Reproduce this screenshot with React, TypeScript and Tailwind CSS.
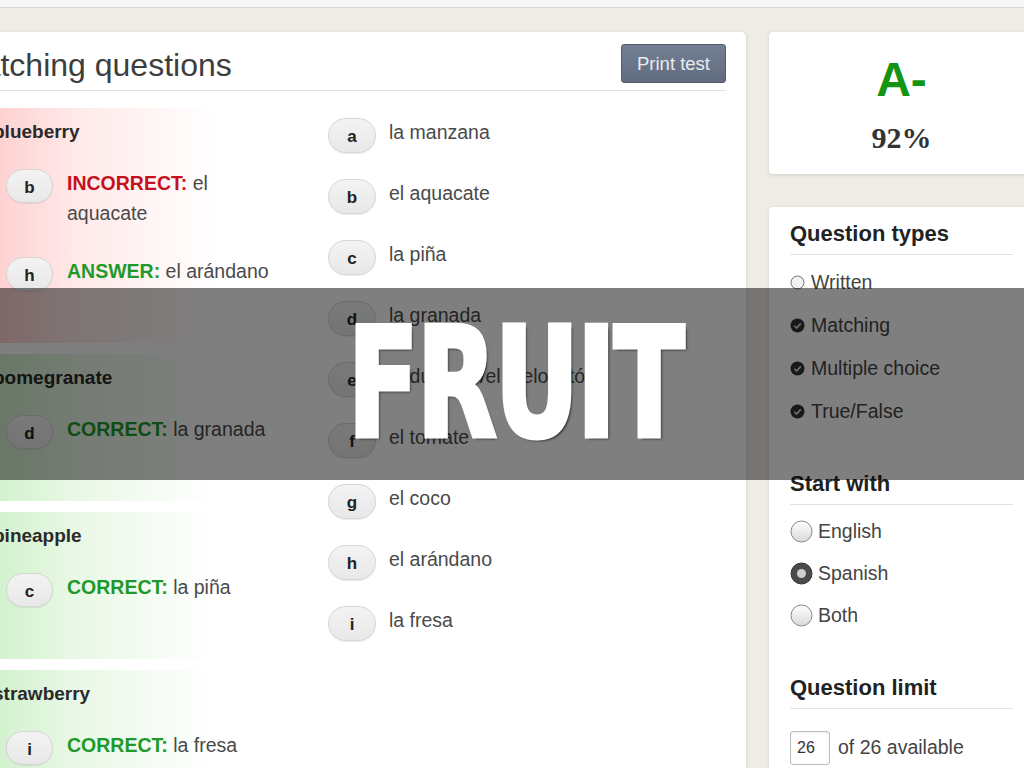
import React from 'react';

interface Answer {
  letter: string;
  label: string;
  kind: 'correct' | 'incorrect' | 'answer';
  text: string;
}

interface Question {
  word: string;
  ok: boolean;
  answers: Answer[];
}

const questions: Question[] = [
  {
    word: 'blueberry',
    ok: false,
    answers: [
      { letter: 'b', label: 'INCORRECT:', kind: 'incorrect', text: 'el aquacate' },
      { letter: 'h', label: 'ANSWER:', kind: 'answer', text: 'el arándano' },
    ],
  },
  { word: 'pomegranate', ok: true, answers: [{ letter: 'd', label: 'CORRECT:', kind: 'correct', text: 'la granada' }] },
  { word: 'pineapple', ok: true, answers: [{ letter: 'c', label: 'CORRECT:', kind: 'correct', text: 'la piña' }] },
  { word: 'strawberry', ok: true, answers: [{ letter: 'i', label: 'CORRECT:', kind: 'correct', text: 'la fresa' }] },
];

const choices = [
  ['a', 'la manzana'],
  ['b', 'el aquacate'],
  ['c', 'la piña'],
  ['d', 'la granada'],
  ['e', 'el durazno/el melocotón'],
  ['f', 'el tomate'],
  ['g', 'el coco'],
  ['h', 'el arándano'],
  ['i', 'la fresa'],
];

const Pill = ({ letter, className = '' }: { letter: string; className?: string }) => (
  <div
    className={`flex shrink-0 items-center justify-center rounded-full border border-[#d6d6d6] bg-[linear-gradient(#f3f3f3,#e8e8e8)] pt-[3px] text-[17px] font-bold text-[#222] shadow-[0_1px_1px_rgba(0,0,0,0.08)] ${className}`}
  >
    {letter}
  </div>
);

const CheckIcon = ({ checked }: { checked: boolean }) => (
  <svg width="15" height="15" viewBox="0 0 15 15" className="shrink-0">
    {checked ? (
      <>
        <circle cx="7.5" cy="7.5" r="7" fill="#333" />
        <path d="M4.3 7.7 L6.6 10 L10.8 5.4" fill="none" stroke="#ddd" strokeWidth="1.6" />
      </>
    ) : (
      <circle cx="7.5" cy="7.5" r="6.5" fill="#f2f2f2" stroke="#777" strokeWidth="1" />
    )}
  </svg>
);

const RadioIcon = ({ selected }: { selected: boolean }) => (
  <svg width="23" height="23" viewBox="0 0 23 23" className="shrink-0">
    <defs>
      <linearGradient id="rg" x1="0" y1="0" x2="0" y2="1">
        <stop offset="0" stopColor="#ffffff" />
        <stop offset="1" stopColor="#d9d9d9" />
      </linearGradient>
    </defs>
    {selected ? (
      <>
        <circle cx="11.5" cy="11.5" r="10.5" fill="#4a4a4a" stroke="#333" />
        <circle cx="11.5" cy="11.5" r="4.5" fill="#cfcfcf" />
      </>
    ) : (
      <circle cx="11.5" cy="11.5" r="10.5" fill="url(#rg)" stroke="#888" />
    )}
  </svg>
);

const QuestionBlock = ({ q }: { q: Question }) => (
  <div
    className={`mb-[11px] pb-[52px] pl-[37px] pt-[12px] ${
      q.ok
        ? 'bg-[linear-gradient(to_right,#c6eec0,#e9f8e6_120px,#ffffff_260px)]'
        : 'bg-[linear-gradient(to_right,#ffc4c4,#ffe9e9_120px,#ffffff_260px)]'
    }`}
  >
    <div className="text-[19px] font-bold leading-[24px] text-[#2a2a2a]">{q.word}</div>
    <div className="mt-[24px] flex flex-col gap-[28px]">
      {q.answers.map((a) => (
        <div key={a.letter + a.kind} className="flex items-start">
          <Pill letter={a.letter} className="ml-[13px] mt-[1px] h-[34px] w-[47px]" />
          <div className="ml-[14px] w-[215px] text-[19.5px] leading-[30px] text-[#4a4a4a]">
            <span className={`font-bold ${a.kind === 'incorrect' ? 'text-[#c4121c]' : 'text-[#1f9a2a]'}`}>{a.label}</span>{' '}
            {a.text}
          </div>
        </div>
      ))}
    </div>
  </div>
);

const SectionTitle = ({ children }: { children: React.ReactNode }) => (
  <div className="border-b border-[#e2e2e2] pb-[6px] text-[22px] font-bold leading-[28px] text-[#222]">{children}</div>
);

export default function App() {
  return (
    <div className="relative h-[768px] w-[1024px] overflow-hidden bg-[#efebe5] font-['Liberation_Sans',Arial,sans-serif]">
      <div className="h-[8px] border-b border-[#dadada] bg-[#f6f6f6]" />

      <div className="ml-[-64px] flex gap-[23px] pt-[24px]">
        {/* Main test card */}
        <div className="h-[760px] w-[810px] shrink-0 rounded-[5px] bg-white px-[20px] pt-[12px] shadow-[0_1px_4px_rgba(0,0,0,0.12)]">
          <div className="flex h-[47px] items-start justify-between border-b border-[#e0e0e0]">
            <div className="mt-[1px] text-[32px] leading-[40px] text-[#3d3d3d]">Matching questions</div>
            <button className="flex h-[39px] w-[105px] items-center justify-center rounded-[3px] border border-[#545d6e] bg-[linear-gradient(#747f93,#626c80)] text-[18.5px] text-[#e9ebef]">
              Print test
            </button>
          </div>

          <div className="flex pt-[17px]">
            <div className="w-[352px] shrink-0">
              {questions.map((q) => (
                <QuestionBlock key={q.word} q={q} />
              ))}
            </div>
            <div className="ml-[20px] flex flex-col gap-[26px] pt-[10px]">
              {choices.map(([l, t]) => (
                <div key={l} className="flex items-start gap-[13px]">
                  <Pill letter={l} className="h-[35px] w-[48px]" />
                  <div className="text-[19.5px] leading-[28px] text-[#4a4a4a]">{t}</div>
                </div>
              ))}
            </div>
          </div>
        </div>

        {/* Sidebar */}
        <div className="flex w-[265px] shrink-0 flex-col gap-[33px]">
          <div className="flex h-[142px] flex-col items-center rounded-[4px] bg-white shadow-[0_1px_4px_rgba(0,0,0,0.12)]">
            <div className="mt-[24px] text-[48px] font-bold leading-[48px] text-[#139413]">A-</div>
            <div className="mt-[17px] font-['Liberation_Serif',serif] text-[30px] font-bold leading-[34px] text-[#333]">92%</div>
          </div>

          <div className="h-[600px] rounded-[4px] bg-white px-[21px] pt-[13px] shadow-[0_1px_4px_rgba(0,0,0,0.12)]">
            <SectionTitle>Question types</SectionTitle>
            <div className="mt-[13px] flex flex-col gap-[15px]">
              {[
                ['Written', false],
                ['Matching', true],
                ['Multiple choice', true],
                ['True/False', true],
              ].map(([label, on]) => (
                <div key={label as string} className="flex items-center gap-[6px] text-[19.5px] leading-[28px] text-[#444]">
                  <CheckIcon checked={on as boolean} />
                  {label}
                </div>
              ))}
            </div>

            <div className="mt-[45px]">
              <SectionTitle>Start with</SectionTitle>
            </div>
            <div className="mt-[12px] flex flex-col gap-[14px]">
              {[
                ['English', false],
                ['Spanish', true],
                ['Both', false],
              ].map(([label, on]) => (
                <div key={label as string} className="flex items-center gap-[5px] text-[19.5px] leading-[28px] text-[#444]">
                  <RadioIcon selected={on as boolean} />
                  {label}
                </div>
              ))}
            </div>

            <div className="mt-[45px]">
              <SectionTitle>Question limit</SectionTitle>
            </div>
            <div className="mt-[22px] flex items-center gap-[8px]">
              <div className="flex h-[34px] w-[40px] items-center rounded-[3px] border border-[#bdbdbd] pl-[6px] text-[16px] text-[#333] shadow-[inset_0_1px_2px_rgba(0,0,0,0.08)]">
                26
              </div>
              <div className="text-[19.5px] text-[#444]">of 26 available</div>
            </div>
          </div>
        </div>
      </div>

      {/* Title overlay */}
      <div className="absolute left-0 right-0 top-[288px] flex h-[192px] items-center justify-center bg-black/50">
        <div className="ml-[6px] scale-x-[0.76] font-['DejaVu_Sans_Condensed','DejaVu_Sans',sans-serif] text-[151px] font-bold leading-none tracking-[-2px] text-white [-webkit-text-stroke:5px_white] [text-shadow:3px_3px_3px_rgba(0,0,0,0.7)]">
          FRUIT
        </div>
      </div>
    </div>
  );
}
